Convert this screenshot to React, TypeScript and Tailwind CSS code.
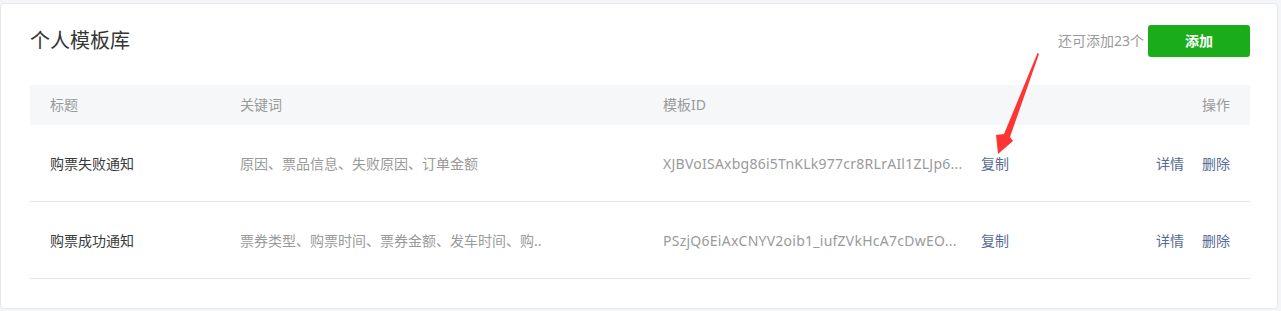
const font = "font-['Noto_Sans','Noto_Sans_CJK_SC',sans-serif]";

type Template = {
  title: string;
  keywords: string;
  id: string;
};

const templates: Template[] = [
  {
    title: '购票失败通知',
    keywords: '原因、票品信息、失败原因、订单金额',
    id: 'XJBVoISAxbg86i5TnKLk977cr8RLrAIl1ZLJp6...',
  },
  {
    title: '购票成功通知',
    keywords: '票券类型、购票时间、票券金额、发车时间、购..',
    id: 'PSzjQ6EiAxCNYV2oib1_iufZVkHcA7cDwEO...',
  },
];

// 红色标注箭头，叠在表格上方
function Arrow() {
  return (
    <svg
      className="pointer-events-none absolute left-0 top-0"
      width="1281"
      height="311"
      viewBox="0 0 1281 311"
    >
      <polygon
        points="1037.5,53 1039,54 1010,137 1013,141 998,154 996,135 1004,134"
        fill="#ff3535"
      />
    </svg>
  );
}

export default function App() {
  return (
    <div className={`relative h-[311px] w-[1281px] bg-[#f4f5f8] pt-[3px] ${font}`}>
      <div className="h-[306px] w-[1278px] rounded-[4px] border border-[#e6e8ec] bg-white pl-[29px] pr-[27px]">
        {/* Cabeçalho */}
        <div className="mt-[21px] flex h-8 items-center justify-between">
          <h2 className="text-[20px] leading-8 text-[#353535]">个人模板库</h2>
          <div className="flex items-center">
            <span className="mr-1 text-sm text-[#9a9a9a]">还可添加23个</span>
            <button className="h-8 w-[102px] rounded-[3px] bg-[#1aad19] text-sm font-bold text-white">
              添加
            </button>
          </div>
        </div>

        {/* Tabela */}
        <div className="mt-[28px] text-sm">
          <div className="flex h-10 items-center bg-[#f6f7f9] text-[#9a9a9a]">
            <div className="w-[190px] pl-5">标题</div>
            <div className="w-[423px] pl-5">关键词</div>
            <div className="flex-1 pl-5">模板ID</div>
            <div className="pr-5">操作</div>
          </div>
          {templates.map((t) => (
            <div key={t.title} className="flex h-[77px] items-center border-b border-[#e7e7eb] pt-px">
              <div className="w-[190px] pl-5 text-[#3a3a3a]">{t.title}</div>
              <div className="w-[423px] truncate pl-5 text-[#9a9a9a]">{t.keywords}</div>
              <div className="flex flex-1 items-center pl-5">
                <span className="w-[300px] overflow-hidden whitespace-nowrap tracking-[0.25px] text-[#9a9a9a]">
                  {t.id}
                </span>
                <a className="ml-[18px] text-[#576b95]">复制</a>
              </div>
              <div className="flex gap-[18px] pr-5 text-[#576b95]">
                <a>详情</a>
                <a>删除</a>
              </div>
            </div>
          ))}
        </div>
      </div>
      <Arrow />
    </div>
  );
}
